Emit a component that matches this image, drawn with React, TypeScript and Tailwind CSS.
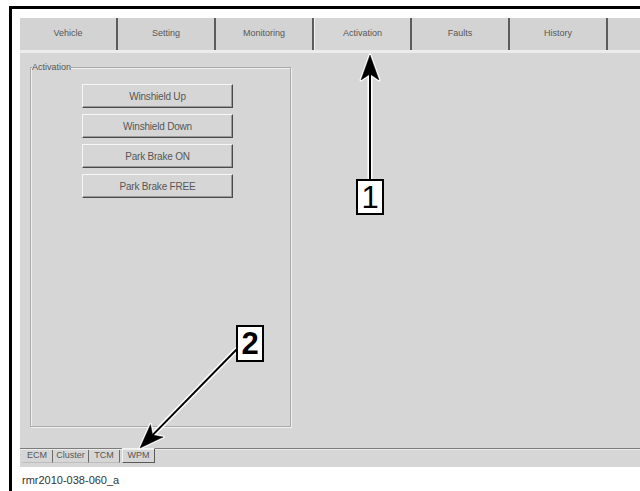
import React from 'react';

const topTabs = ['Vehicle', 'Setting', 'Monitoring', 'Activation', 'Faults', 'History'];
const actions = ['Winshield Up', 'Winshield Down', 'Park Brake ON', 'Park Brake FREE'];
const moduleTabs = [
  { label: 'ECM', w: 'w-[31px]' },
  { label: 'Cluster', w: 'w-[36px]' },
  { label: 'TCM', w: 'w-[31px]' },
];

function Callouts() {
  return (
    <>
      <svg className="pointer-events-none absolute left-0 top-0" width="640" height="491" viewBox="0 0 640 491">
        {/* white halo first */}
        <g stroke="#ffffff" strokeLinejoin="round" fill="#ffffff">
          <line x1="370" y1="179" x2="370" y2="74" strokeWidth="5" />
          <polygon points="370,55 379,80 370,74 361,80" strokeWidth="3" />
          <line x1="237" y1="349" x2="152.6" y2="435.1" strokeWidth="5" />
          <polygon points="140,448 150.5,424.6 152.6,435.1 163.2,437" strokeWidth="3" />
        </g>
        <g stroke="#000000" fill="#000000">
          <line x1="370" y1="179" x2="370" y2="74" strokeWidth="2" />
          <polygon points="370,55 379,80 370,74 361,80" strokeWidth="0.5" />
          <line x1="237" y1="349" x2="152.6" y2="435.1" strokeWidth="2" />
          <polygon points="140,448 150.5,424.6 152.6,435.1 163.2,437" strokeWidth="0.5" />
        </g>
      </svg>
      <div className="absolute left-[356px] top-[179px] flex h-[36px] w-[28px] items-center justify-center border-2 border-black bg-white text-[31px] leading-none text-black">
        1
      </div>
      <div className="absolute left-[236px] top-[325px] flex h-[37px] w-[28px] items-center justify-center border-2 border-black bg-white text-[31px] font-bold leading-none text-black">
        2
      </div>
    </>
  );
}

export default function App() {
  return (
    <div className="relative h-[491px] w-[640px] overflow-hidden bg-white font-['Liberation_Sans',Arial,sans-serif]">
      <div className="ml-[9px] mt-[6px] h-[485px] border-l-[3px] border-t-[3px] border-black pl-[8px] pt-[9px]">
        {/* diagnostic screen */}
        <div className="flex h-[449px] flex-col bg-[#d6d6d6] text-[#575757]">
          <div className="flex h-[32px] bg-[#d3d3d3]">
            {topTabs.map((t) => (
              <div
                key={t}
                className={`flex w-[98px] items-center justify-center border-r-2 border-r-[#5c5c5c] text-[9px] ${
                  t === 'Activation' ? 'border-l border-l-[#f4f4f4] bg-[#d6d6d6]' : ''
                }`}
              >
                {t}
              </div>
            ))}
          </div>
          <div className="h-[3px] bg-[#ececec]" />

          <div className="flex-1 pl-[10px] pt-[14px]">
            <div className="relative h-[360px] w-[261px] border border-[#ababab] shadow-[inset_1px_1px_0_#efefef,1px_1px_0_#efefef]">
              <span className="absolute -top-[6px] left-[1px] bg-[#d6d6d6] text-[9px] leading-[11px]">Activation</span>
              <div className="ml-[51px] mt-[16px] flex flex-col gap-[6px]">
                {actions.map((a) => (
                  <div
                    key={a}
                    className="flex h-[24px] w-[151px] items-center justify-center border border-b-[#4a4a4a] border-l-[#f6f6f6] border-r-[#4a4a4a] border-t-[#f6f6f6] text-[10px] tracking-[-0.02em] shadow-[inset_-1px_-1px_0_#9a9a9a]"
                  >
                    {a}
                  </div>
                ))}
              </div>
            </div>
          </div>

          <div className="h-[2px] border-t border-t-[#7c7c7c] border-b border-b-[#ededed]" />
          <div className="flex h-[17px] pl-[2px] text-[9px]">
            {moduleTabs.map((m) => (
              <div
                key={m.label}
                className={`flex h-[13px] ${m.w} items-center justify-center border-r border-r-[#6a6a6a] border-b border-b-[#bdbdbd]`}
              >
                {m.label}
              </div>
            ))}
            <div className="-mt-[2px] ml-[2px] flex h-[15px] w-[33px] items-center justify-center border border-b-[#5a5a5a] border-l-[#f4f4f4] border-r-[#5a5a5a] border-t-[#f4f4f4]">
              WPM
            </div>
          </div>
        </div>
        <div className="pl-[2px] pt-[8px] text-[11px] leading-none text-[#333333]">rmr2010-038-060_a</div>
      </div>
      <Callouts />
    </div>
  );
}
